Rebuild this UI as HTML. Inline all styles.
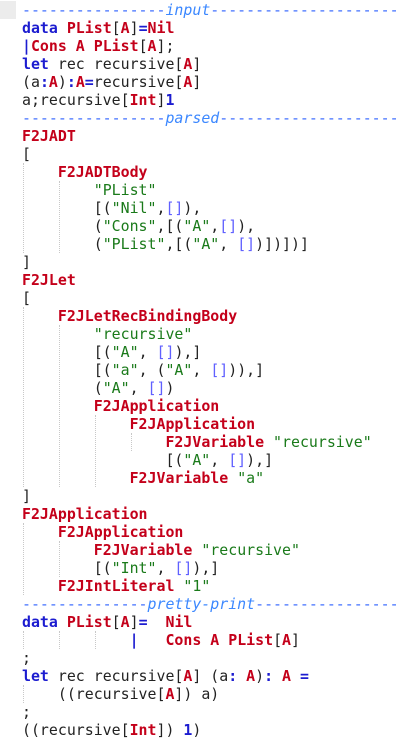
<!DOCTYPE html>
<html><head><meta charset="utf-8"><style>
html,body{margin:0;padding:0;background:#fff;width:400px;height:742px;overflow:hidden;position:relative}
pre{position:absolute;left:22px;top:1px;margin:0;font-family:"DejaVu Sans Mono","Liberation Mono",monospace;font-size:14.9px;line-height:18px;color:#222;white-space:pre}
.k{color:#1c1cd0;font-weight:bold}
.t{color:#c4001a;font-weight:bold}
.s{color:#1a7a1a}
.b{color:#6060ff}
.h{color:#3c6cff}
.h i{color:#3c88ff}
.g{position:absolute;width:0;border-left:1px dotted #c8c8c8}
.hl{position:absolute;left:0;top:1px;width:16px;height:18px;background:#ececec}
</style></head><body>
<div class="hl"></div>
<div class="g" style="left:23px;top:163px;height:90px"></div>
<div class="g" style="left:59px;top:181px;height:72px"></div>
<div class="g" style="left:23px;top:307px;height:180px"></div>
<div class="g" style="left:59px;top:325px;height:162px"></div>
<div class="g" style="left:95px;top:415px;height:72px"></div>
<div class="g" style="left:131px;top:433px;height:18px"></div>
<div class="g" style="left:23px;top:523px;height:72px"></div>
<div class="g" style="left:59px;top:541px;height:36px"></div>
<div class="g" style="left:23px;top:631px;height:18px"></div>
<div class="g" style="left:59px;top:631px;height:18px"></div>
<div class="g" style="left:95px;top:631px;height:18px"></div>
<div class="g" style="left:23px;top:685px;height:18px"></div>
<pre><span class="h">----------------<i>input</i>-----------------------</span>
<span class="k">data</span> <span class="t">PList</span>[<span class="t">A</span>]<span class="k">=</span><span class="t">Nil</span>
<span class="k">|</span><span class="t">Cons A PList</span>[<span class="t">A</span>];
<span class="k">let</span> rec recursive[<span class="t">A</span>]
(a<span class="k">:</span><span class="t">A</span>)<span class="k">:</span><span class="t">A</span><span class="k">=</span>recursive[<span class="t">A</span>]
a;recursive[<span class="t">Int</span>]<span class="k">1</span>
<span class="h">----------------<i>parsed</i>----------------------</span>
<span class="t">F2JADT</span>
[
    <span class="t">F2JADTBody</span>
        <span class="s">"PList"</span>
        [(<span class="s">"Nil"</span>,<span class="b">[]</span>),
        (<span class="s">"Cons"</span>,[(<span class="s">"A"</span>,<span class="b">[]</span>),
        (<span class="s">"PList"</span>,[(<span class="s">"A"</span>, <span class="b">[]</span>)])])]
]
<span class="t">F2JLet</span>
[
    <span class="t">F2JLetRecBindingBody</span>
        <span class="s">"recursive"</span>
        [(<span class="s">"A"</span>, <span class="b">[]</span>),]
        [(<span class="s">"a"</span>, (<span class="s">"A"</span>, <span class="b">[]</span>)),]
        (<span class="s">"A"</span>, <span class="b">[]</span>)
        <span class="t">F2JApplication</span>
            <span class="t">F2JApplication</span>
                <span class="t">F2JVariable</span> <span class="s">"recursive"</span>
                [(<span class="s">"A"</span>, <span class="b">[]</span>),]
            <span class="t">F2JVariable</span> <span class="s">"a"</span>
]
<span class="t">F2JApplication</span>
    <span class="t">F2JApplication</span>
        <span class="t">F2JVariable</span> <span class="s">"recursive"</span>
        [(<span class="s">"Int"</span>, <span class="b">[]</span>),]
    <span class="t">F2JIntLiteral</span> <span class="s">"1"</span>
<span class="h">--------------<i>pretty-print</i>------------------</span>
<span class="k">data</span> <span class="t">PList</span>[<span class="t">A</span>]<span class="k">=</span>  <span class="t">Nil</span>
            <span class="k">|</span>   <span class="t">Cons A PList</span>[<span class="t">A</span>]
;
<span class="k">let</span> rec recursive[<span class="t">A</span>] (a<span class="k">:</span> <span class="t">A</span>)<span class="k">:</span> <span class="t">A</span> <span class="k">=</span>
    ((recursive[<span class="t">A</span>]) a)
;
((recursive[<span class="t">Int</span>]) <span class="k">1</span>)</pre>
</body></html>
